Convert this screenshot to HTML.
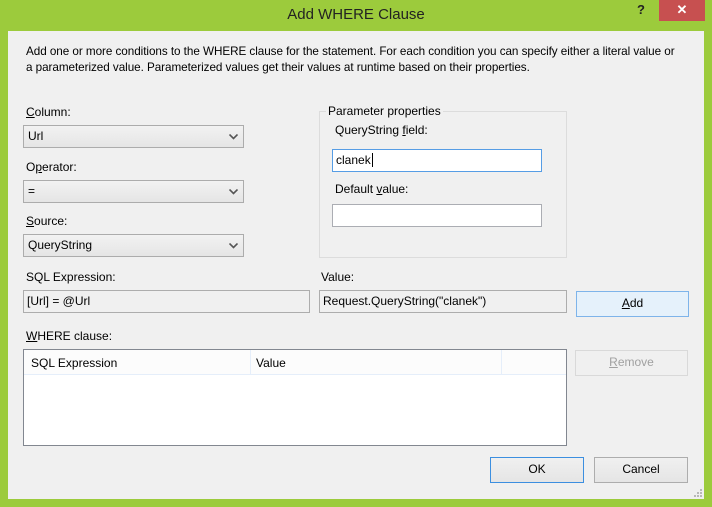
<!DOCTYPE html>
<html><head><style>
*{margin:0;padding:0;box-sizing:border-box}
body{width:712px;height:507px;background:#9ccb3c;font-family:"Liberation Sans",sans-serif;font-size:12px;color:#000;position:relative;overflow:hidden}
.a{position:absolute;white-space:nowrap}
#client{position:absolute;left:8px;top:31px;width:696px;height:468px;background:#f0f0f0}
.title{left:0;width:712px;top:6px;text-align:center;font-size:15px;color:#222}
.close{left:659px;top:0;width:46px;height:21px;background:#c75050;color:#fff;text-align:center;font-size:13px;line-height:20px;font-weight:bold}
.help{left:637px;top:2px;font-size:13px;font-weight:bold;color:#222}
.combo{border:1px solid #acacac;background:linear-gradient(#f2f2f2,#e5e5e5);height:23px;padding-left:4px;line-height:21px}
.combo svg{position:absolute;right:5px;top:8px}
.tb{border:1px solid #abadb3;background:#fff;height:23px;padding-left:3px;line-height:21px}
.ro{background:#f0f0f0;border-color:#adadad}
.btn{border:1px solid #adadad;background:linear-gradient(#f0f0f0,#e5e5e5);text-align:center;line-height:23px;height:26px}
u{text-decoration:underline}
</style></head><body>
<div class="a title">Add WHERE Clause</div>
<div class="a help">?</div>
<div class="a close">✕</div>
<div id="client"></div>
<div class="a" style="left:26px;top:44px;line-height:16px;font-size:11.7px;letter-spacing:-0.05px">Add one or more conditions to the WHERE clause for the statement. For each condition you can specify either a literal value or<br>a parameterized value. Parameterized values get their values at runtime based on their properties.</div>

<div class="a" style="left:26px;top:105px"><u>C</u>olumn:</div>
<div class="a combo" style="left:23px;top:125px;width:221px">Url<svg width="9" height="6"><path d="M0.5 0.5L4.5 4.5L8.5 0.5" fill="none" stroke="#555" stroke-width="1.6"/></svg></div>
<div class="a" style="left:26px;top:160px">O<u>p</u>erator:</div>
<div class="a combo" style="left:23px;top:180px;width:221px">=<svg width="9" height="6"><path d="M0.5 0.5L4.5 4.5L8.5 0.5" fill="none" stroke="#555" stroke-width="1.6"/></svg></div>
<div class="a" style="left:26px;top:214px"><u>S</u>ource:</div>
<div class="a combo" style="left:23px;top:234px;width:221px">QueryString<svg width="9" height="6"><path d="M0.5 0.5L4.5 4.5L8.5 0.5" fill="none" stroke="#555" stroke-width="1.6"/></svg></div>
<div class="a" style="left:26px;top:270px">SQL Expression:</div>
<div class="a tb ro" style="left:23px;top:290px;width:287px">[Url] = @Url</div>

<div class="a" style="left:319px;top:111px;width:248px;height:147px;border:1px solid #dcdcdc"></div>
<div class="a" style="left:326px;top:104px;background:#f0f0f0;padding:0 2px">Parameter properties</div>
<div class="a" style="left:335px;top:123px">QueryString <u>f</u>ield:</div>
<div class="a tb" style="left:332px;top:149px;width:210px;border-color:#569de5">clanek<span style="border-left:1px solid #000;margin-left:1px"></span></div>
<div class="a" style="left:335px;top:182px">Default <u>v</u>alue:</div>
<div class="a tb" style="left:332px;top:204px;width:210px"></div>
<div class="a" style="left:321px;top:270px">Value:</div>
<div class="a tb ro" style="left:319px;top:290px;width:248px">Request.QueryString("clanek")</div>
<div class="a btn" style="left:576px;top:291px;width:113px;background:#e5f1fb;border-color:#7eb4ea"><u>A</u>dd</div>

<div class="a" style="left:26px;top:329px"><u>W</u>HERE clause:</div>
<div class="a" style="left:23px;top:349px;width:544px;height:97px;border:1px solid #828790;background:#fff">
 <div class="a" style="left:0;top:0;width:542px;height:25px;border-bottom:1px solid #e5eefa;background:#fcfcfc"></div>
 <div class="a" style="left:226px;top:0;height:25px;border-left:1px solid #e5eefa"></div>
 <div class="a" style="left:477px;top:0;height:25px;border-left:1px solid #e5eefa"></div>
 <div class="a" style="left:7px;top:6px">SQL Expression</div>
 <div class="a" style="left:232px;top:6px">Value</div>
</div>
<div class="a btn" style="left:575px;top:350px;width:113px;background:#f0f0f0;border-color:#d9d9d9;color:#a0a0a0"><u>R</u>emove</div>
<div class="a btn" style="left:490px;top:457px;width:94px;border-color:#3c8fe0">OK</div>
<div class="a btn" style="left:594px;top:457px;width:94px">Cancel</div>
<svg class="a" style="left:693px;top:488px" width="10" height="10"><g fill="#b8b8b8"><rect x="7" y="1" width="2" height="2"/><rect x="4" y="4" width="2" height="2"/><rect x="7" y="4" width="2" height="2"/><rect x="1" y="7" width="2" height="2"/><rect x="4" y="7" width="2" height="2"/><rect x="7" y="7" width="2" height="2"/></g></svg>
</body></html>
